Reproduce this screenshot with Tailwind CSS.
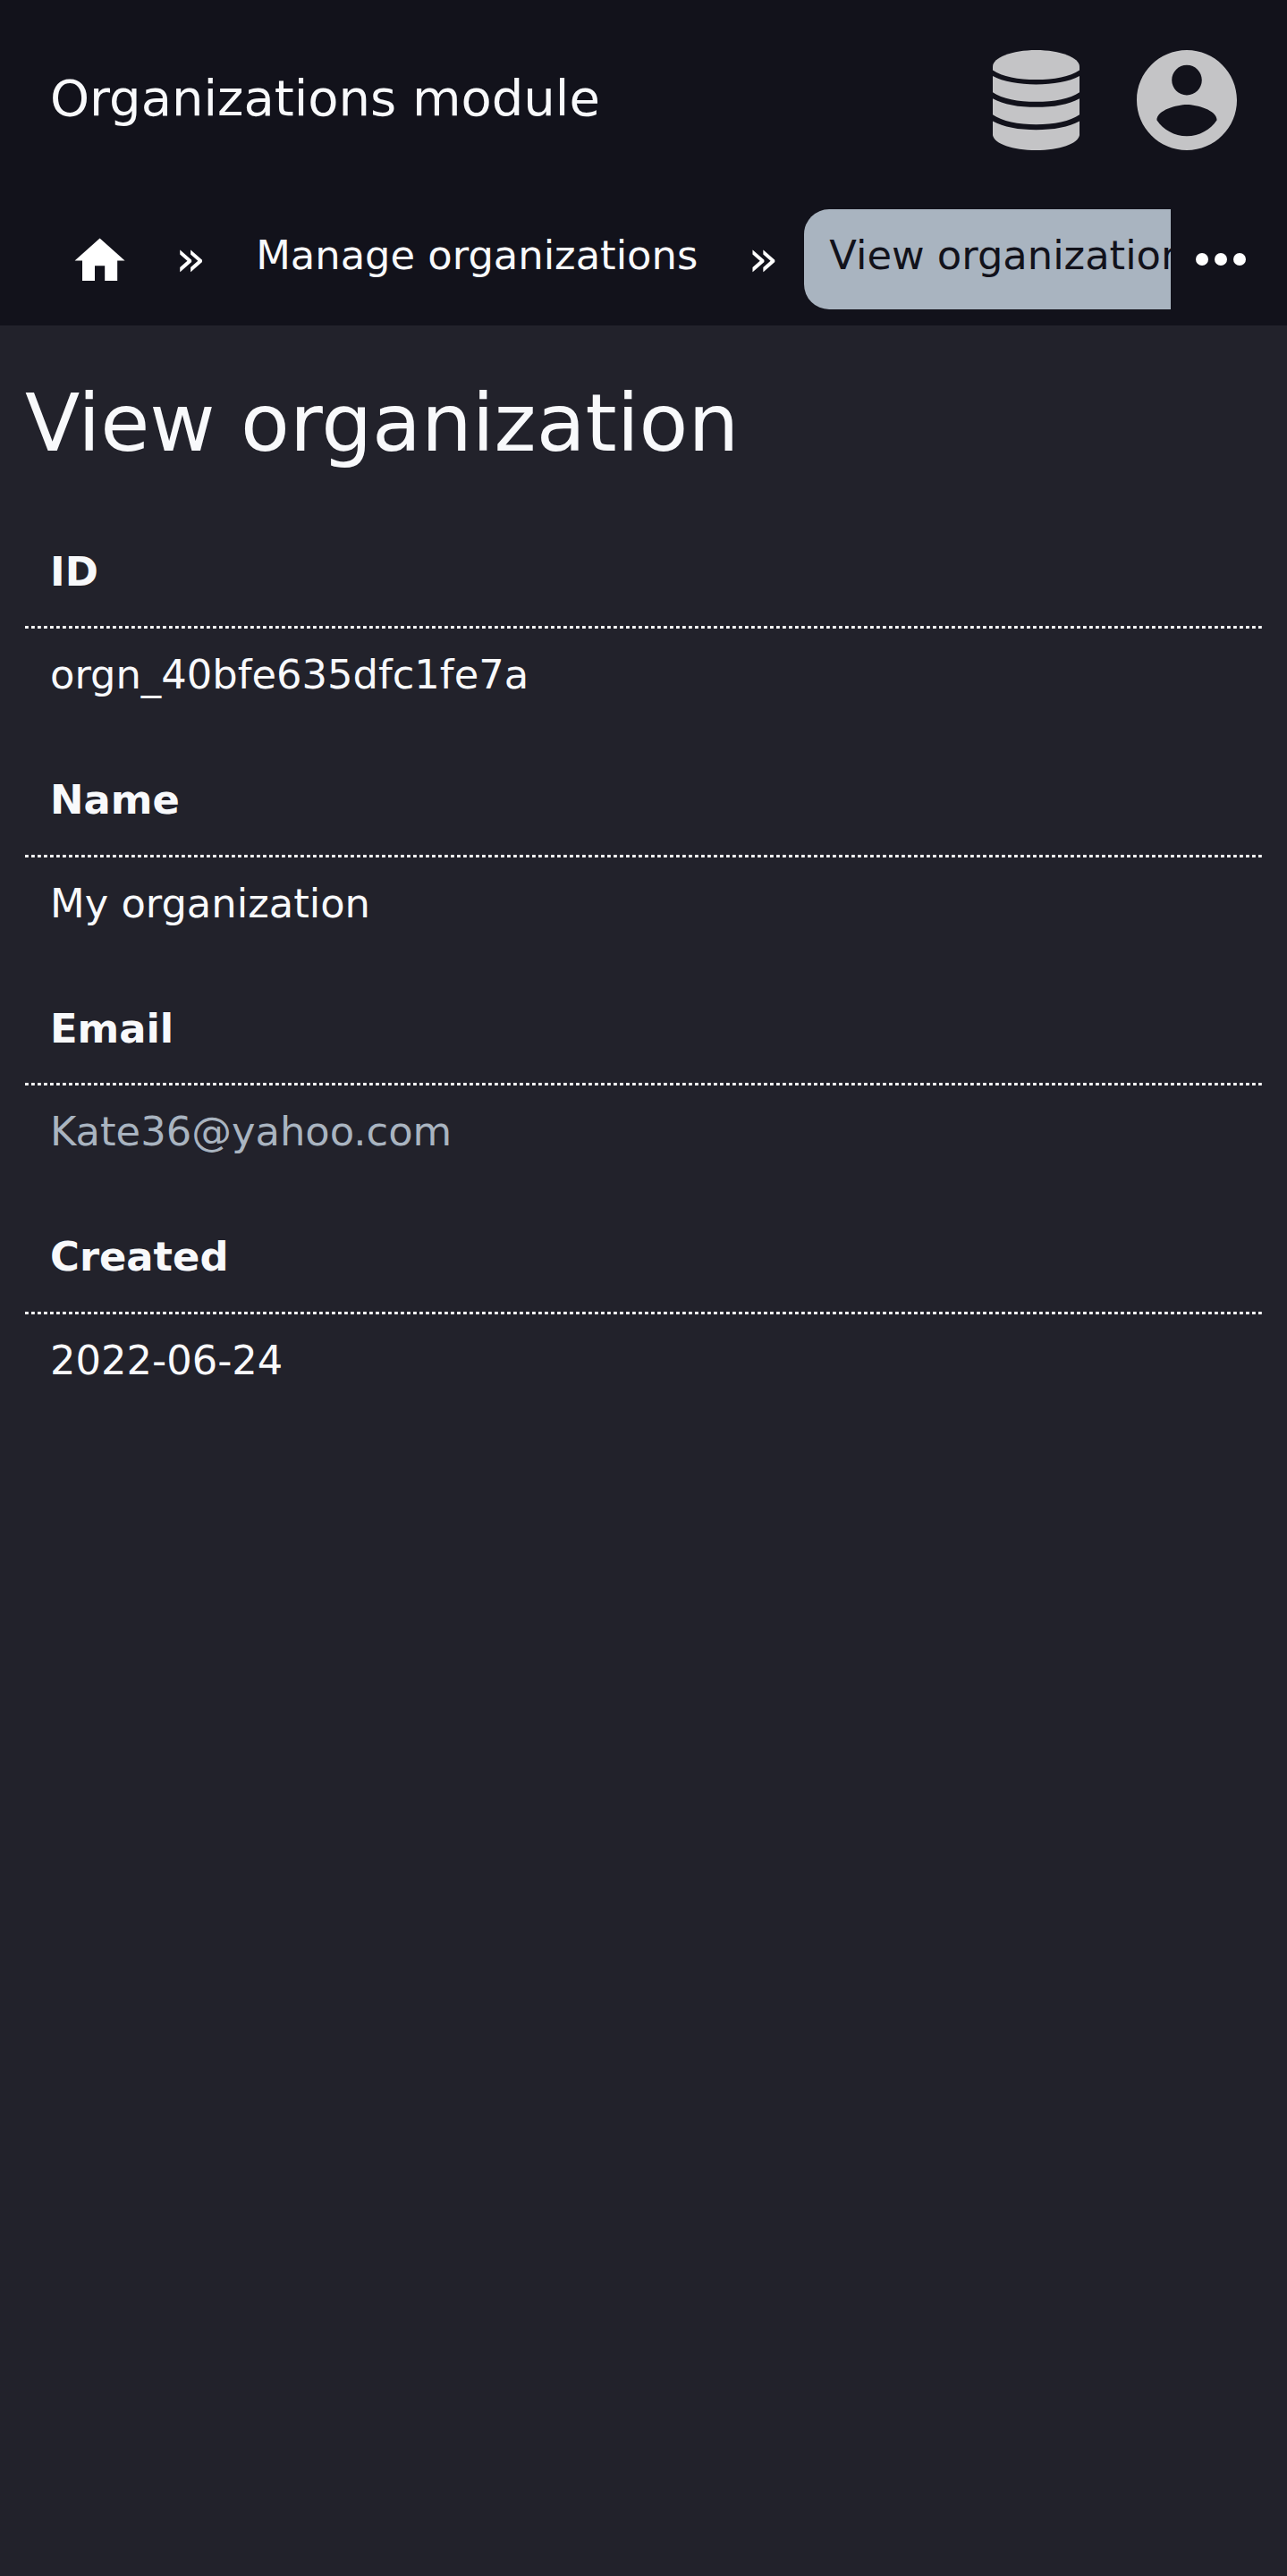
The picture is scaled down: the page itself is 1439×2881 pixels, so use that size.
<!DOCTYPE html>
<html lang="en">
<head>
<meta charset="utf-8">
<title>View organization</title>
<script src="https://cdn.jsdelivr.net/npm/@tailwindcss/browser@4"></script>
</head>
<body class="min-h-[2881px] bg-[#22222b] font-['DejaVu_Sans',sans-serif] text-[44.8px] text-[#f8f9fb]">
<header class="h-[364px] bg-[#12121b]">
  <div class="flex h-56 items-center justify-between pl-14 pr-[56.500px]">
    <div class="-mt-[4px] text-[56px] leading-[84px]">Organizations module</div>
    <div class="flex items-center gap-16 text-[#c4c4c6]">
      <svg class="h-28 w-[97px]" viewBox="90 78 291 335" preserveAspectRatio="none" fill="currentColor">
        <path d="M90 145V133C90 103 155 78 235.500 78S381 103 381 133V145C350 166 295 177 235.500 177S121 166 90 145Z"/>
        <path d="M90 165C125 184 178 193 235.500 193S346 184 381 165V219C350 240 295 251 235.500 251S121 240 90 219Z"/>
        <path d="M90 240C125 260 178 269 235.500 269S346 260 381 240V294C350 316 295 327 235.500 327S121 316 90 294Z"/>
        <path d="M90 316C125 336 178 345 235.500 345S346 336 381 316V363C375 392 315 413 235.500 413S96 392 90 363Z"/>
      </svg>
      <svg class="size-28" viewBox="2 2 20 20" fill="currentColor"><path d="M12 2C6.480 2 2 6.480 2 12s4.480 10 10 10 10-4.480 10-10S17.520 2 12 2zm0 3c1.660 0 3 1.340 3 3s-1.340 3-3 3-3-1.340-3-3 1.340-3 3-3zm0 14.200c-2.500 0-4.710-1.280-6-3.220.030-1.990 4-3.080 6-3.080 1.990 0 5.970 1.090 6 3.080-1.290 1.940-3.500 3.220-6 3.220z"/></svg>
    </div>
  </div>
  <nav class="flex pt-[10.400px]">
    <div class="flex w-[1309px] overflow-hidden whitespace-nowrap pl-[78.400px]">
      <a class="flex h-28 w-[67.200px] shrink-0 items-center"><svg class="mt-[3px] size-[67.200px]" viewBox="0 0 24 24" fill="#fff"><path d="M10 20v-6h4v6h5v-8h3L12 3 2 12h3v8z"/></svg></a>
      <span class="w-[112.600px] shrink-0 pl-[50.500px] text-[56px] leading-[109px] text-white">»</span>
      <a class="shrink-0 px-7 leading-[103.500px]">Manage organizations</a>
      <span class="ml-auto w-[63px] shrink-0 text-[56px] leading-[109px] text-white">»</span>
      <a class="h-28 w-[409.700px] shrink-0 rounded-l-[28px] bg-[#a9b4c0] pl-7 leading-[103.500px] text-[#12121b]">View organization</a>
    </div>
    <button class="flex h-28 w-28 items-center justify-center"><svg class="size-21" viewBox="0 0 24 24" fill="#fff"><circle cx="6" cy="12" r="2"/><circle cx="12" cy="12" r="2"/><circle cx="18" cy="12" r="2"/></svg></button>
  </nav>
</header>
<main class="px-7">
  <h1 class="pt-[42px] text-[89.600px] leading-[134px]">View organization</h1>
  <dl class="pt-[65.500px] leading-[67px]">
    <div class="h-[255.600px]"><dt class="h-[97.500px] bg-[repeating-linear-gradient(90deg,#fff_0_3px,#fffc_3px_4px,transparent_4px_7px)] bg-[length:100%_3px] bg-bottom bg-no-repeat pl-7 font-bold">ID</dt><dd class="pl-7 pt-[18px]">orgn_40bfe635dfc1fe7a</dd></div>
    <div class="h-[255.600px]"><dt class="h-[97.500px] bg-[repeating-linear-gradient(90deg,#fff_0_3px,#fffc_3px_4px,transparent_4px_7px)] bg-[length:100%_3px] bg-bottom bg-no-repeat pl-7 font-bold">Name</dt><dd class="pl-7 pt-[18px]">My organization</dd></div>
    <div class="h-[255.600px]"><dt class="h-[97.500px] bg-[repeating-linear-gradient(90deg,#fff_0_3px,#fffc_3px_4px,transparent_4px_7px)] bg-[length:100%_3px] bg-bottom bg-no-repeat pl-7 font-bold">Email</dt><dd class="pl-7 pt-[18px] text-[#a9b4c0]">Kate36@yahoo.com</dd></div>
    <div class="h-[255.600px]"><dt class="h-[97.500px] bg-[repeating-linear-gradient(90deg,#fff_0_3px,#fffc_3px_4px,transparent_4px_7px)] bg-[length:100%_3px] bg-bottom bg-no-repeat pl-7 font-bold">Created</dt><dd class="pl-7 pt-[18px]">2022-06-24</dd></div>
  </dl>
</main>
</body>
</html>
